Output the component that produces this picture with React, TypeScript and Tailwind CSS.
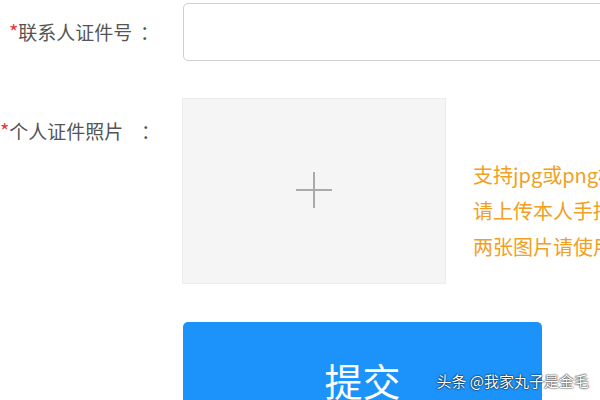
const font = { fontFamily: '"Noto Sans CJK SC", "Noto Sans", sans-serif' };

function Star() {
  return <span className="text-[20px] leading-none text-[#e4393c]">*</span>;
}

export default function App() {
  return (
    <div className="relative h-[400px] w-[600px] overflow-hidden bg-white" style={font}>
      {/* 证件号 */}
      <div className="flex items-center pt-[3px]">
        <label className="flex w-[183px] shrink-0 items-center pl-[9px] text-[19px] text-[#555] whitespace-nowrap">
          <span className="w-[131px]">
            <Star />联系人证件号
          </span>
          <span>：</span>
        </label>
        <div className="h-[58px] w-[460px] shrink-0 rounded-[5px] border border-[#cfcfcf] bg-white" />
      </div>

      {/* 照片 */}
      <div className="mt-[37px] flex">
        <label className="flex h-[66px] w-[182px] shrink-0 items-center text-[19px] text-[#555] whitespace-nowrap">
          <span className="w-[141px]">
            <Star />个人证件照片
          </span>
          <span>：</span>
        </label>
        <div className="flex h-[186px] w-[264px] shrink-0 items-center justify-center border border-[#ececec] bg-[#f5f5f5]">
          <svg width="38" height="38" viewBox="0 0 38 38" className="-mt-[2px]">
            <path d="M19 1v36M1 19h36" stroke="#aaa" strokeWidth="2" fill="none" />
          </svg>
        </div>
        <div className="ml-[27px] mt-[59px] whitespace-nowrap text-[20px] leading-[36px] text-[#f0a023]">
          <p>支持jpg或png格式图片，大小不超过5M</p>
          <p>请上传本人手持身份证照片</p>
          <p>两张图片请使用同一证件</p>
        </div>
      </div>

      {/* 提交 */}
      <div className="mt-[38px] pl-[183px]">
        <button className="flex h-[90px] w-[359px] justify-center rounded-[5px] bg-[#1c93fb] pt-[30px] text-[38px] leading-[56px] text-white">
          提交
        </button>
      </div>

      <div className="absolute bottom-[8px] right-[11px] text-[15px] text-white [text-shadow:0_0_2px_rgba(0,0,0,0.9),0_0_1px_rgba(0,0,0,0.9)]">
        头条 @我家丸子是金毛
      </div>
    </div>
  );
}
